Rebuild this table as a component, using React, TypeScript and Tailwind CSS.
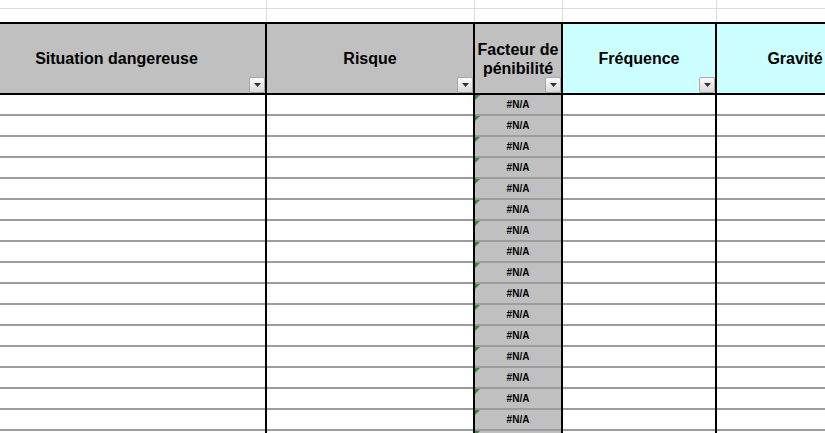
import React from 'react';

type Col = {
  label: string[];
  width: string;
  headerBg: string;
  pad?: string;
  na?: boolean;
  dropdown?: boolean;
};

const columns: Col[] = [
  { label: ['Situation dangereuse'], width: 'w-[267px]', headerBg: 'bg-[#c0c0c0]', pad: 'pr-[32px]', dropdown: true },
  { label: ['Risque'], width: 'w-[208px]', headerBg: 'bg-[#c0c0c0]', dropdown: true },
  { label: ['Facteur de', 'pénibilité'], width: 'w-[88px]', headerBg: 'bg-[#c0c0c0]', na: true, dropdown: true },
  { label: ['Fréquence'], width: 'w-[154px]', headerBg: 'bg-[#ccffff]', dropdown: true },
  { label: ['Gravité'], width: 'w-[158px]', headerBg: 'bg-[#ccffff]', dropdown: true },
];

// 16 full rows fit in the window, the 17th only peeks in at the bottom
const ROWS = 17;

const FilterButton: React.FC = () => (
  <div className="absolute bottom-0 right-0 w-[16px] h-[16px] border border-[#a9a9a9] rounded-[2px] bg-gradient-to-b from-[#fbfbfb] to-[#d9d9d9] flex items-center justify-center">
    <svg width="7" height="4" viewBox="0 0 7 4">
      <polygon points="0,0 7,0 3.5,4" fill="#333" />
    </svg>
  </div>
);

const App: React.FC = () => {
  return (
    <div className="w-[825px] h-[433px] overflow-hidden bg-white font-['Liberation_Sans',Arial,sans-serif] text-black">
      {/* rows above the table */}
      <div className="flex">
        {columns.map((c, i) => (
          <div key={i} className={`${c.width} shrink-0 border-r border-[#dcdcdc]`}>
            <div className="h-[9px] border-b border-[#dcdcdc]"></div>
            <div className="h-[13px]"></div>
          </div>
        ))}
      </div>

      {/* table */}
      <div className="flex">
        {columns.map((c, i) => (
          <div key={i} className={`${c.width} shrink-0 flex flex-col border-r-2 border-black`}>
            <div className={`relative h-[73px] border-y-2 border-black ${c.headerBg} ${c.pad ?? ''} flex flex-col items-center justify-center text-[16px] font-bold leading-[19px] text-center whitespace-nowrap`}>
              {c.label.map((l) => (
                <span key={l}>{l}</span>
              ))}
              {c.dropdown && <FilterButton />}
            </div>
            {Array.from({ length: ROWS }).map((_, r) => (
              <div
                key={r}
                className={`relative h-[21px] shrink-0 border-b-2 border-[#9c9c9c] ${c.na ? 'bg-[#c0c0c0]' : 'bg-white'} flex items-center justify-center`}
              >
                {c.na && (
                  <>
                    <svg className="absolute top-0 left-0" width="5" height="5" viewBox="0 0 5 5">
                      <polygon points="0,0 5,0 0,5" fill="#2f8f3a" />
                    </svg>
                    {r < ROWS - 1 && <span className="text-[10px] font-bold leading-none">#N/A</span>}
                  </>
                )}
              </div>
            ))}
          </div>
        ))}
      </div>
    </div>
  );
};

export default App;
